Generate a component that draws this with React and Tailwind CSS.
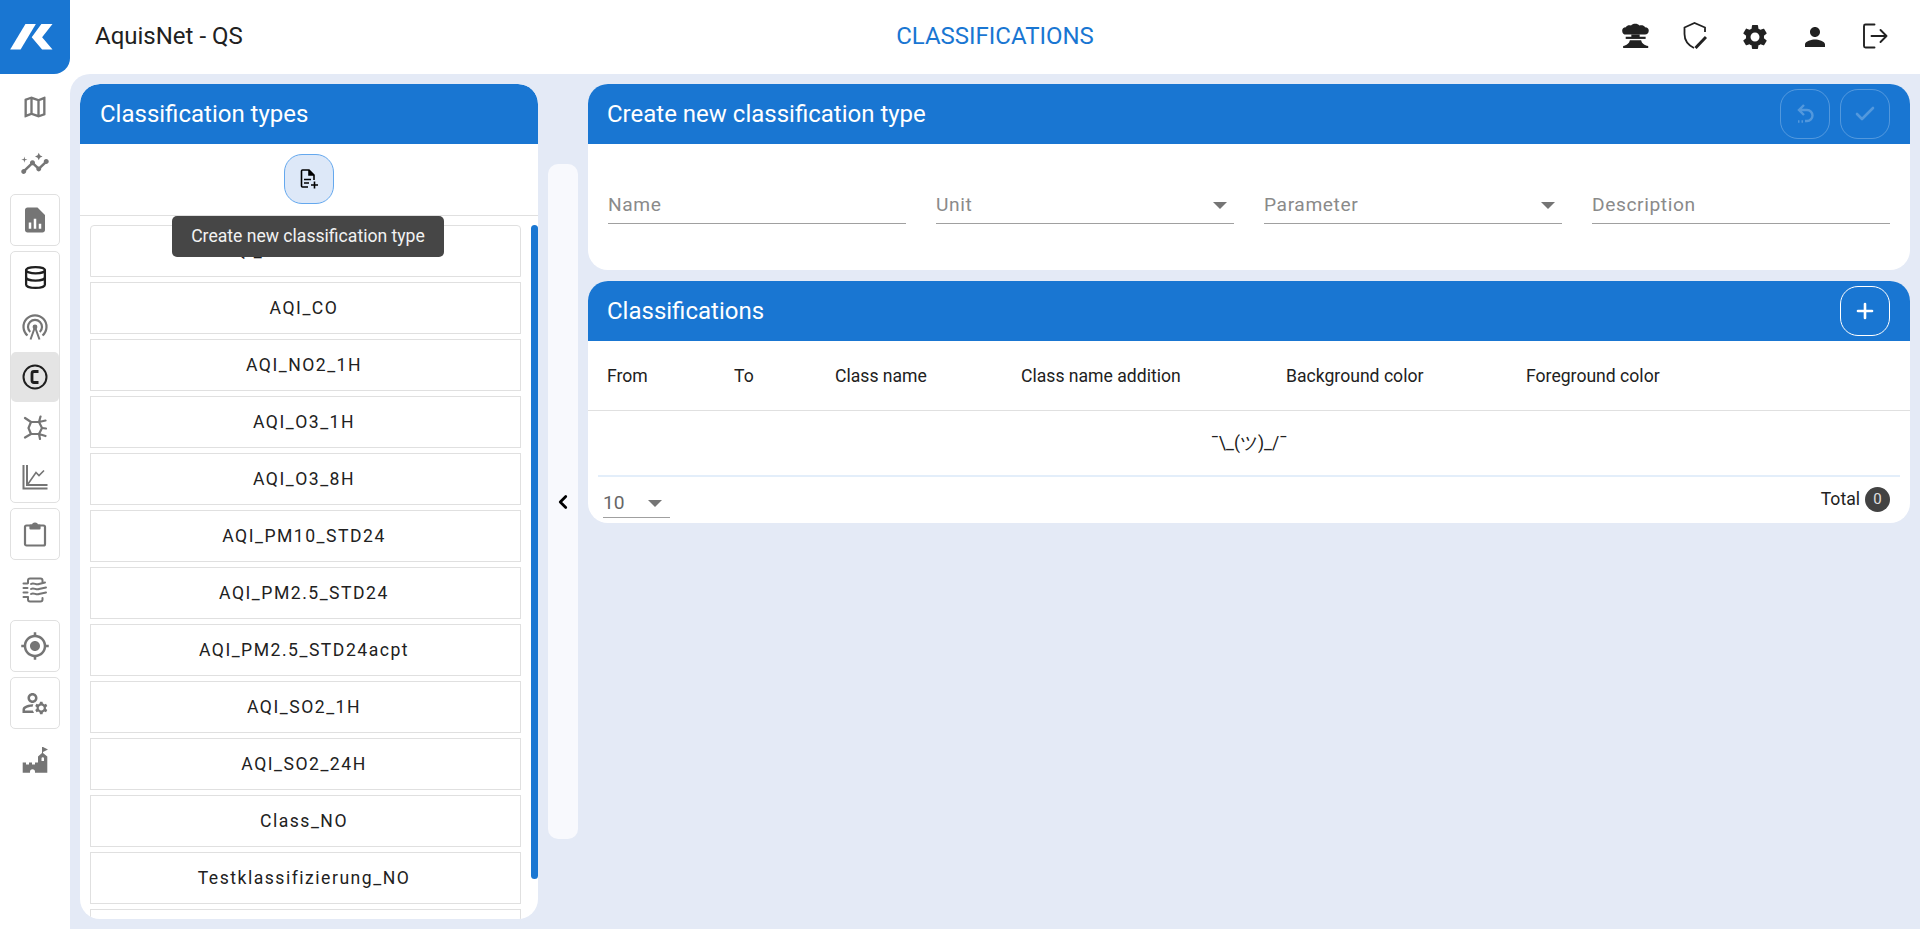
import { Check, ChevronLeft, Database, Plus } from "lucide-react";

const types = [
  "AQI_BENZENE24H",
  "AQI_CO",
  "AQI_NO2_1H",
  "AQI_O3_1H",
  "AQI_O3_8H",
  "AQI_PM10_STD24",
  "AQI_PM2.5_STD24",
  "AQI_PM2.5_STD24acpt",
  "AQI_SO2_1H",
  "AQI_SO2_24H",
  "Class_NO",
  "Testklassifizierung_NO",
  "Testklassifizierung_SO2",
];

const columns = [
  ["From", "w-[127px]"],
  ["To", "w-[101px]"],
  ["Class name", "w-[186px]"],
  ["Class name addition", "w-[265px]"],
  ["Background color", "w-[240px]"],
  ["Foreground color", "w-[240px]"],
];

const MuiIcon = ({ d, size = 28, className = "" }) => (
  <svg width={size} height={size} viewBox="0 0 24 24" fill="currentColor" className={className}>
    <path d={d} />
  </svg>
);

const icons = {
  map: "M20.5 3l-.16.03L15 5.1 9 3 3.36 4.9c-.21.07-.36.25-.36.48V20.5c0 .28.22.5.5.5l.16-.03L9 18.9l6 2.1 5.64-1.9c.21-.07.36-.25.36-.48V3.5c0-.28-.22-.5-.5-.5zM10 5.47l4 1.4v11.66l-4-1.4V5.47zm-5 .99l3-1.01v11.7l-3 1.16V6.46zm14 11.08l-3 1.01V6.86l3-1.16v11.84z",
  insights: "M21 8c-1.45 0-2.26 1.44-1.93 2.51l-3.55 3.56c-.3-.09-.74-.09-1.04 0l-2.55-2.55C12.27 10.45 11.46 9 10 9c-1.45 0-2.27 1.44-1.93 2.52l-4.56 4.55C2.44 15.74 1 16.55 1 18c0 1.1.9 2 2 2 1.45 0 2.26-1.44 1.93-2.51l4.55-4.56c.3.09.74.09 1.04 0l2.55 2.55C12.73 16.55 13.54 18 15 18c1.45 0 2.27-1.44 1.93-2.52l3.56-3.55c1.07.33 2.51-.48 2.51-1.93 0-1.1-.9-2-2-2zM15 9l.94-2.07L18 6l-2.06-.93L15 3l-.92 2.07L12 6l2.08.93zM3.5 11L4 9l2-.5L4 8l-.5-2L3 8l-2 .5L3 9z",
  report: "M14 2H6c-1.1 0-2 .9-2 2v16c0 1.1.9 2 2 2h12c1.1 0 2-.9 2-2V8l-6-6zM9 19H7v-5h2v5zm4 0h-2v-8h2v8zm4 0h-2v-4h2v4z",
  gps: "M12 8c-2.21 0-4 1.79-4 4s1.79 4 4 4 4-1.79 4-4-1.79-4-4-4zm8.94 3c-.46-4.17-3.77-7.48-7.94-7.94V1h-2v2.06C6.83 3.52 3.52 6.83 3.06 11H1v2h2.06c.46 4.17 3.77 7.48 7.94 7.94V23h2v-2.06c4.17-.46 7.48-3.77 7.94-7.94H23v-2h-2.06zM12 19c-3.87 0-7-3.13-7-7s3.13-7 7-7 7 3.13 7 7-3.13 7-7 7z",
  account: "M4 18v-.65c0-.34.16-.66.41-.81C6.1 15.53 8.03 15 10 15c.03 0 .05 0 .08.01.1-.7.3-1.37.59-1.98-.22-.02-.44-.03-.67-.03-2.42 0-4.68.67-6.61 1.82-.88.52-1.39 1.5-1.39 2.53V20h9.26c-.42-.6-.75-1.28-.97-2H4zM10 12c2.21 0 4-1.79 4-4s-1.79-4-4-4-4 1.79-4 4 1.79 4 4 4zm0-6c1.1 0 2 .9 2 2s-.9 2-2 2-2-.9-2-2 .9-2 2-2zM20.75 16c0-.22-.03-.42-.06-.63l1.14-1.01-1-1.73-1.45.49c-.32-.27-.68-.48-1.08-.63L18 11h-2l-.3 1.49c-.4.15-.76.36-1.08.63l-1.45-.49-1 1.73 1.14 1.01c-.03.21-.06.41-.06.63s.03.42.06.63l-1.14 1.01 1 1.73 1.45-.49c.32.27.68.48 1.08.63L16 21h2l.3-1.49c.4-.15.76-.36 1.08-.63l1.45.49 1-1.73-1.14-1.01c.03-.21.06-.41.06-.63zM17 18c-1.1 0-2-.9-2-2s.9-2 2-2 2 .9 2 2-.9 2-2 2z",
  settings: "M19.14 12.94c.04-.3.06-.61.06-.94 0-.32-.02-.64-.07-.94l2.03-1.58c.18-.14.23-.41.12-.61l-1.92-3.32c-.12-.22-.37-.29-.59-.22l-2.39.96c-.5-.38-1.03-.7-1.62-.94l-.36-2.54c-.04-.24-.24-.41-.48-.41h-3.84c-.24 0-.43.17-.47.41l-.36 2.54c-.59.24-1.13.57-1.62.94l-2.39-.96c-.22-.08-.47 0-.59.22L2.74 8.87c-.12.21-.08.47.12.61l2.03 1.58c-.05.3-.09.63-.09.94s.02.64.07.94l-2.03 1.58c-.18.14-.23.41-.12.61l1.92 3.32c.12.22.37.29.59.22l2.39-.96c.5.38 1.03.7 1.62.94l.36 2.54c.05.24.24.41.48.41h3.84c.24 0 .44-.17.47-.41l.36-2.54c.59-.24 1.13-.56 1.62-.94l2.39.96c.22.08.47 0 .59-.22l1.92-3.32c.12-.22.07-.47-.12-.61l-2.01-1.58zM12 15.6c-1.98 0-3.6-1.62-3.6-3.6s1.62-3.6 3.6-3.6 3.6 1.62 3.6 3.6-1.62 3.6-3.6 3.6z",
  person: "M12 12c2.21 0 4-1.79 4-4s-1.79-4-4-4-4 1.79-4 4 1.79 4 4 4zm0 2c-2.67 0-8 1.34-8 4v2h16v-2c0-2.66-5.33-4-8-4z",
};

const Logo = () => (
  <svg width="43" height="26" viewBox="0 0 41 25" fill="white" className="mr-[7px]">
    <polygon points="0,24.5 14.7,0 24.7,0 10,24.5" />
    <polygon points="40.7,0 30,0 20.7,12.7 30.7,24.5 40.7,24.5 30.7,12.7" />
  </svg>
);

const AntennaIcon = () => (
  <svg width="26" height="26" viewBox="0 0 26 26" fill="none" stroke="currentColor" strokeWidth="2.2">
    <path d="M5.5 21.5a11.5 11.5 0 1 1 15 0" />
    <path d="M8.2 18a7 7 0 1 1 9.6 0" />
    <circle cx="13" cy="13" r="2.4" fill="currentColor" stroke="none" />
    <path d="M13 13L8.5 25.5M13 13l4.5 12.5" strokeWidth="2" />
  </svg>
);

const CopyrightIcon = () => (
  <svg width="26" height="26" viewBox="0 0 26 26" fill="none" stroke="currentColor">
    <circle cx="13" cy="13" r="11.5" strokeWidth="2" />
    <path d="M16.5 7.5H12a2 2 0 0 0-2 2v7a2 2 0 0 0 2 2h4.5" strokeWidth="2.8" />
  </svg>
);

const VirusIcon = () => (
  <svg width="24" height="25" viewBox="0 0 24 25" fill="none" stroke="currentColor" strokeWidth="2.2" strokeLinecap="round" strokeLinejoin="round">
    <path d="M8 7h8l3 6-3 6H8l-2.5-6z" />
    <path d="M8 7L2 3M16 7l1.5-5.5M16 7l6.5-1.5M19 13l4 .5M16 19l6.5 2M16 19l1 5M8 19l-6 3.5" />
  </svg>
);

const ChartIcon = () => (
  <svg width="26" height="26" viewBox="0 0 26 26" fill="none" stroke="currentColor" strokeWidth="2">
    <path d="M1.5 1v23.5H25.5M5 1v20h20.5" />
    <path d="M6 20L14 8.5l3 3 5-5" strokeWidth="1.6" />
  </svg>
);

const ClipboardIcon = () => (
  <svg width="24" height="26" viewBox="0 0 24 26" fill="none" stroke="currentColor" strokeWidth="2.2" strokeLinejoin="round">
    <rect x="2" y="4.5" width="20" height="20" rx="1.5" />
    <path d="M7.5 4.5H10a2 2 0 0 1 4 0h2.5v3h-9z" fill="currentColor" />
  </svg>
);

const NotebookIcon = () => (
  <svg width="26" height="26" viewBox="0 0 26 26" fill="none" stroke="currentColor" strokeWidth="2" strokeLinecap="round">
    <path d="M6 6V3.5a2 2 0 0 1 2-2h10.5a2 2 0 0 1 2 2V5M6 20v2.5a2 2 0 0 0 2 2h10.5a2 2 0 0 0 2-2V21" />
    <path d="M1.5 6.5h4M1.5 11h4M1.5 15.5h4M1.5 20h4" />
    <path d="M9 7c3-2 5 1.5 8 0l6-1.5M9 12c3-2 5 1.5 8 0l7-1.5M9 17c3-2 5 1.5 8 0l7-1.5" />
  </svg>
);

const CastleIcon = () => (
  <svg width="26" height="26" viewBox="0 0 26 26" fill="currentColor">
    <path
      fillRule="evenodd"
      d="M.7 15.5H4v2h3v-2h3v2h3v-2h3V9.5L20 6V0h1l5 2.5L21 5v1l4.3 3.5V25.700H13v-1a2.5 2.5 0 0 0-5 0v1H.7zM19.5 14v-2.5a1.25 1.25 0 0 1 2.5 0V14z"
    />
  </svg>
);

const CloudIcon = () => (
  <svg width="27" height="25" viewBox="0 0 24 24" preserveAspectRatio="none" fill="currentColor">
    <path d="M4 11a3.5 3.5 0 0 1-.6-7C4.5 2.2 6.5 1.7 8 2.5 9.5 0 14 0 15.5 2.5 17.3 1.7 19.5 2.2 20.5 4a3.5 3.5 0 0 1-.5 7z" />
    <rect x="8.3" y="11" width="7.4" height="2.5" />
    <rect x="3.3" y="13.2" width="17.7" height="2.1" />
    <path d="M7 16.5h10c.5 3 3 5 6.3 5.5v2H1v-2c3-.5 5.5-2.5 6-5.5z" />
  </svg>
);

const ShieldPenIcon = () => (
  <svg width="24" height="27" viewBox="0 0 24 27" fill="none" stroke="currentColor">
    <path d="M11 26C5 23 1.5 18 1.5 12V5.5L11.5 1 22 5.5V10" strokeWidth="1.8" />
    <path d="M12.5 26L23 15" strokeWidth="3" />
  </svg>
);

const LogoutIcon = () => (
  <svg width="26" height="26" viewBox="0 0 26 26" fill="none" stroke="currentColor" strokeWidth="1.9" strokeLinecap="round" strokeLinejoin="round">
    <path d="M12.5 1.5h-9A1.5 1.5 0 0 0 2 3v20a1.5 1.5 0 0 0 1.5 1.5h9" />
    <path d="M9.5 13h15M18.5 7l6 6-6 6" />
  </svg>
);

const UndoIcon = () => (
  <svg width="22" height="22" viewBox="0 0 22 22" fill="none" stroke="currentColor" strokeWidth="2.4">
    <path d="M10 2L5 7l5 5M5 7h8a5.5 5.5 0 0 1 0 11h-2" />
    <path d="M4 18.5h1.500M7.5 18.5H9" />
  </svg>
);

const FilePlusIcon = () => (
  <svg width="20" height="20" viewBox="0 0 20 20" fill="none" stroke="black" strokeWidth="1.6">
    <path d="M9 18H3.500a1 1 0 0 1-1-1V2a1 1 0 0 1 1-1H10l5 5v5" />
    <path d="M10 1v5h5" fill="black" />
    <path d="M5 10.5h7M5 14h5M12 16h7M15.5 12.5v7" />
  </svg>
);

const SideItem = ({ children, boxed, active, dark, className = "h-[52px]" }) => (
  <div
    className={`flex items-center justify-center w-full shrink-0 rounded-[5px] ${className} ${
      boxed ? "border border-[#e0e0e0]" : ""
    } ${active ? "bg-[#e4e4e4]" : ""} ${dark ? "text-[#1f1f1f]" : "text-[#757575]"}`}
  >
    {children}
  </div>
);

const PanelHeader = ({ title, children, className = "pl-5" }) => (
  <div className={`flex items-center justify-between h-[60px] shrink-0 pr-5 bg-[#1976d2] rounded-t-[20px] text-white text-[24px] ${className}`}>
    <span>{title}</span>
    {children}
  </div>
);

const Arrow = () => (
  <span className="border-x-[7px] border-t-[7px] border-x-transparent border-t-[#757575]" />
);

const Field = ({ label, select }) => (
  <div className="flex items-center justify-between h-[44px] pt-[7px] pr-[7px] border-b border-[#a0a0a0] text-[19.2px] tracking-[0.6px] text-[#8a8a8a]">
    <span>{label}</span>
    {select && <Arrow />}
  </div>
);

const App = () => {
  return (
    <div className="flex w-full h-screen overflow-hidden bg-white font-['Roboto',sans-serif] text-[#212121]">
      {/* Sidebar */}
      <aside className="flex flex-col items-center w-[70px] shrink-0">
        <div className="flex items-center justify-center w-full h-[74px] shrink-0 bg-[#1976d2] rounded-br-[16px]">
          <Logo />
        </div>
        <div className="flex flex-col items-center w-[50px] gap-[5px] mt-[7px]">
          <SideItem><MuiIcon d={icons.map} size={28} /></SideItem>
          <SideItem className="h-[51px]"><MuiIcon d={icons.insights} size={30} /></SideItem>
          <SideItem boxed><MuiIcon d={icons.report} size={30} /></SideItem>
          <div className="flex flex-col w-full h-[252px] shrink-0 border border-[#e0e0e0] rounded-[5px]">
            <SideItem dark className="h-[50px]"><Database size={25} strokeWidth={2.2} /></SideItem>
            <SideItem className="h-[50px]"><AntennaIcon /></SideItem>
            <SideItem active dark className="h-[50px]"><CopyrightIcon /></SideItem>
            <SideItem className="h-[50px]"><VirusIcon /></SideItem>
            <SideItem className="h-[50px]"><ChartIcon /></SideItem>
          </div>
          <SideItem boxed><ClipboardIcon /></SideItem>
          <SideItem className="h-[50px]"><NotebookIcon /></SideItem>
          <SideItem boxed><MuiIcon d={icons.gps} size={30} /></SideItem>
          <SideItem boxed><MuiIcon d={icons.account} size={30} /></SideItem>
          <SideItem><CastleIcon /></SideItem>
        </div>
      </aside>

      <div className="flex flex-col flex-1 min-w-0">
        {/* Top bar */}
        <header className="grid grid-cols-[1fr_auto_1fr] items-center h-[74px] shrink-0">
          <div className="pl-[25px] pb-[2px] text-[24px]">AquisNet - QS</div>
          <div className="pb-[2px] text-[24px] text-[#1976d2]">CLASSIFICATIONS</div>
          <div className="flex justify-end pr-[15px] text-[#212121]">
            <div className="flex justify-center w-[60px] pt-px"><CloudIcon /></div>
            <div className="flex justify-center w-[60px]"><ShieldPenIcon /></div>
            <div className="flex justify-center w-[60px]"><MuiIcon d={icons.settings} size={30} /></div>
            <div className="flex justify-center w-[60px]"><MuiIcon d={icons.person} size={30} /></div>
            <div className="flex justify-center w-[60px] pt-px"><LogoutIcon /></div>
          </div>
        </header>

        {/* Content */}
        <main className="flex flex-1 min-h-0 p-[10px] bg-[#e4eaf6] rounded-tl-[20px]">
          <section className="relative flex flex-col w-[458px] shrink-0 bg-white rounded-[20px] overflow-hidden">
            <PanelHeader title="Classification types" />
            <div className="flex items-center justify-center h-[72px] pb-px shrink-0 border-b border-[#e0e0e0]">
              <button className="flex items-center justify-center w-[50px] h-[50px] rounded-[18px] bg-[#dde8f8] border border-[#64a8ee]">
                <FilePlusIcon />
              </button>
            </div>
            <div className="flex flex-col gap-[5px] pt-[9px] pl-[10px] pr-[17px] overflow-hidden">
              {types.map((name) => (
                <div
                  key={name}
                  className="flex items-center justify-center h-[52px] shrink-0 pr-[3px] border border-[#e0e0e0] first:rounded-t-[4px] text-[17.6px] tracking-[1.5px] text-[#212121]"
                >
                  {name}
                </div>
              ))}
            </div>
            {/* Scrollbar */}
            <div className="absolute left-[451px] top-[141px] w-[7px] h-[654px] rounded-[4px] bg-[#1976d2]" />
            {/* Tooltip */}
            <div className="absolute left-[92px] top-[132px] flex items-center justify-center w-[272px] h-[41px] rounded-[5px] bg-[#464646] text-[17.6px] text-[#f2f2f2]">
              Create new classification type
            </div>
          </section>

          <div className="flex items-center justify-center w-[30px] shrink-0 mx-[10px] my-[80px] rounded-[10px] bg-[#f8f9fd] text-black">
            <ChevronLeft size={22} strokeWidth={3} />
          </div>

          <div className="flex flex-col flex-1 min-w-0 gap-[11px]">
            <section className="h-[186px] shrink-0 bg-white rounded-[20px]">
              <PanelHeader title="Create new classification type" className="pl-[19px]">
                <div className="flex gap-[10px]">
                  <button className="flex items-center justify-center w-[50px] h-[50px] rounded-[18px] border border-white/25 text-white/25">
                    <UndoIcon />
                  </button>
                  <button className="flex items-center justify-center w-[50px] h-[50px] rounded-[18px] border border-white/25 text-white/25">
                    <Check size={24} strokeWidth={2.6} />
                  </button>
                </div>
              </PanelHeader>
              <div className="grid grid-cols-4 gap-[30px] px-5 pt-[36px]">
                <Field label="Name" />
                <Field label="Unit" select />
                <Field label="Parameter" select />
                <Field label="Description" />
              </div>
            </section>

            <section className="h-[242px] shrink-0 bg-white rounded-[20px]">
              <PanelHeader title="Classifications" className="pl-[19px]">
                <button className="flex items-center justify-center w-[50px] h-[50px] rounded-[18px] border border-white text-white">
                  <Plus size={24} strokeWidth={2.6} />
                </button>
              </PanelHeader>
              <div className="flex items-center h-[70px] pt-[2px] pl-[19px] border-b border-[#e0e0e0] text-[17.6px]">
                {columns.map(([label, width]) => (
                  <div key={label} className={width}>{label}</div>
                ))}
              </div>
              <div className="flex items-center justify-center h-[66px] mx-[10px] border-b-2 border-[#e3eefa] text-[17.6px]">
                ¯\_(ツ)_/¯
              </div>
              <div className="flex justify-between px-[15px] pt-[5px]">
                <div className="flex items-center justify-between w-[67px] h-[36px] pt-[8px] pr-2 border-b border-[#a0a0a0] text-[19.2px] text-[#666666]">
                  <span>10</span>
                  <Arrow />
                </div>
                <div className="flex items-center gap-[5px] h-[26px] pr-[5px] mt-[4px] text-[17.6px]">
                  <span>Total</span>
                  <span className="flex items-center justify-center w-[25px] h-[25px] rounded-full bg-[#424242] text-[15px] text-[#e0e0e0]">0</span>
                </div>
              </div>
            </section>
          </div>
        </main>
      </div>
    </div>
  );
};

export default App;
